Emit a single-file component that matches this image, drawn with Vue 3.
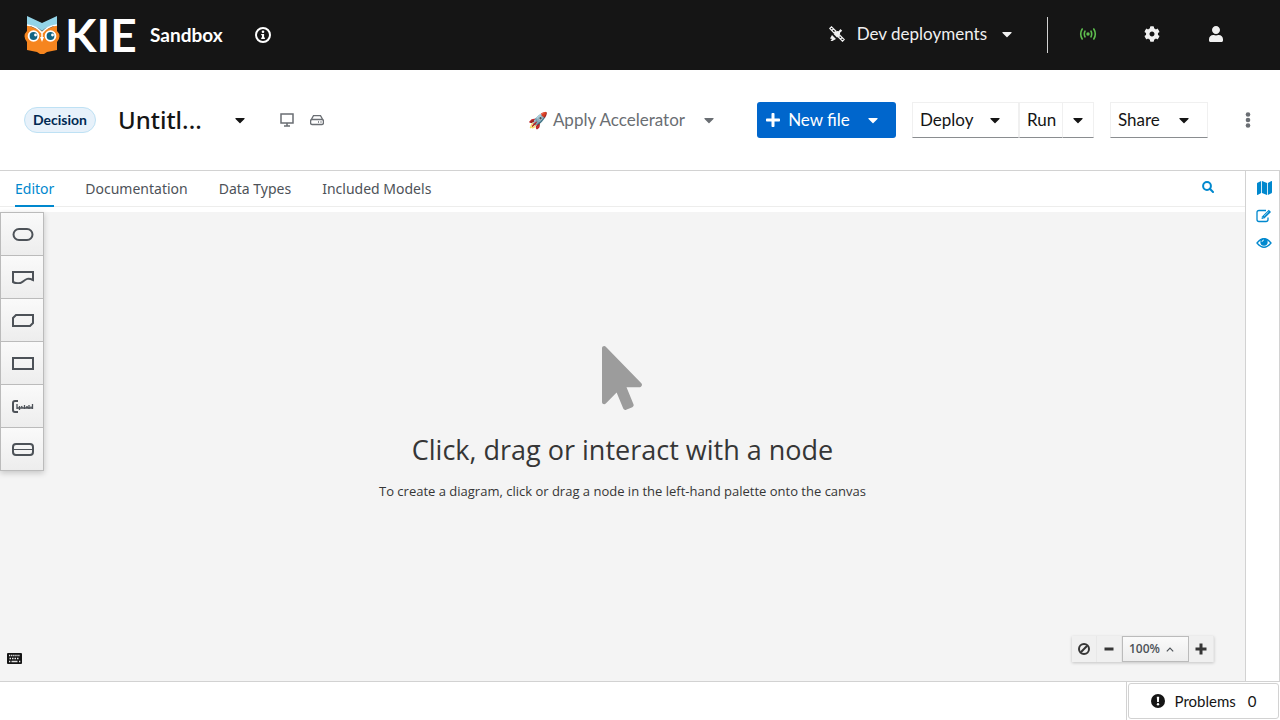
<script setup>
import { ref } from 'vue'

const tabs = ['Editor', 'Documentation', 'Data Types', 'Included Models']
const activeTab = ref('Editor')
const fileName = ref('Untitl...')

const caret = 'M31.3 192h257.3c17.8 0 26.7 21.5 14.1 34.1L174.1 354.8c-7.8 7.8-20.5 7.8-28.3 0L17.2 226.1C4.6 213.5 13.5 192 31.3 192z'
const plus = 'M416 208H272V64c0-17.67-14.33-32-32-32h-32c-17.67 0-32 14.33-32 32v144H32c-17.67 0-32 14.33-32 32v32c0 17.67 14.33 32 32 32h144v144c0 17.67 14.33 32 32 32h32c17.67 0 32-14.33 32-32V304h144c17.67 0 32-14.33 32-32v-32c0-17.67-14.33-32-32-32z'
const cog = 'M487.4 315.7l-42.6-24.6c4.3-23.2 4.3-47 0-70.2l42.6-24.6c4.9-2.8 7.1-8.6 5.5-14-11.1-35.6-30-67.8-54.7-94.6-3.8-4.1-10-5.1-14.8-2.3L380.8 110c-17.9-15.4-38.5-27.3-60.8-35.1V25.8c0-5.6-3.9-10.5-9.4-11.7-36.7-8.2-74.3-7.8-109.2 0-5.5 1.2-9.4 6.1-9.4 11.7V75c-22.2 7.9-42.8 19.8-60.8 35.1L88.7 85.5c-4.9-2.8-11-1.9-14.8 2.3-24.7 26.7-43.6 58.9-54.7 94.6-1.7 5.4.6 11.2 5.5 14L67.3 221c-4.3 23.2-4.3 47 0 70.2l-42.6 24.6c-4.9 2.8-7.1 8.6-5.5 14 11.1 35.6 30 67.8 54.7 94.6 3.8 4.1 10 5.1 14.8 2.3l42.6-24.6c17.9 15.4 38.5 27.3 60.8 35.1v49.2c0 5.6 3.9 10.5 9.4 11.7 36.7 8.2 74.3 7.8 109.2 0 5.5-1.2 9.4-6.1 9.4-11.7v-49.2c22.2-7.9 42.8-19.8 60.8-35.1l42.6 24.6c4.9 2.8 11 1.9 14.8-2.3 24.7-26.7 43.6-58.9 54.7-94.6 1.5-5.5-.7-11.3-5.6-14.1zM256 336c-44.1 0-80-35.9-80-80s35.9-80 80-80 80 35.9 80 80-35.9 80-80 80z'
const user = 'M224 256c70.7 0 128-57.3 128-128S294.7 0 224 0 96 57.3 96 128s57.3 128 128 128zm89.6 32h-16.7c-22.2 10.2-46.9 16-72.9 16s-50.6-5.8-72.9-16h-16.7C60.2 288 0 348.2 0 422.4V464c0 26.5 21.5 48 48 48h352c26.5 0 48-21.5 48-48v-41.6c0-74.2-60.2-134.4-134.4-134.4z'
const pointer = 'M302.189 329.126H196.105l55.831 135.993c3.889 9.428-.555 19.999-9.444 23.999l-49.165 21.427c-9.165 4-19.443-.571-23.332-9.714l-53.053-129.136-86.664 89.138C18.729 472.71 0 463.554 0 447.977V18.299C0 1.899 19.921-6.096 30.277 5.443l284.412 292.542c11.472 11.179 3.007 31.141-12.5 31.141z'
const map = 'M0 117.66v346.32c0 11.32 11.43 19.06 21.94 14.86L160 416V32L20.12 87.95A32.006 32.006 0 0 0 0 117.66zM192 416l192 64V96L192 32v384zM554.06 33.16L416 96v384l139.88-55.95A31.996 31.996 0 0 0 576 394.34V48.02c0-11.32-11.43-19.06-21.94-14.86z'

const palette = [
  { name: 'Input Data', paths: ['M7 1h8a5 5 0 0 1 0 11H7A5 5 0 0 1 7 1z'] },
  { name: 'Knowledge Source', paths: ['M1 1h20v8C16 6.500 14 8 11 10.500C8 13 4 12.500 1 11z'] },
  { name: 'Business Knowledge Model', paths: ['M4 1h17v8l-3 3H1V4z'] },
  { name: 'Decision', paths: ['M1 1h20v11H1z'] },
  { name: 'Text Annotation', paths: ['M6 1H3Q1 1 1 3v7q0 2 2 2h3', 'M5 4v5 M7.500 6v4 M9.500 6l1 2.500 M12.500 5v4 M14 7h2 M17 5v4 M18.500 7h1 M20.500 4v5 M5 8h16'] },
  { name: 'Decision Service', paths: ['M4 1h14q3 0 3 3v5q0 3-3 3H4q-3 0-3-3V4q0-3 3-3z'], line: 'M1 6.500h20' },
]
</script>

<template>
  <div class="app">
    <header class="masthead">
      <a class="brand" href="#" aria-label="KIE Sandbox home">
        <svg class="owl" viewBox="0 0 36 39" aria-hidden="true">
          <path fill="#f6851f" d="M3 10L18 16L33 10V16Q38 21 33 27V35L23 37L20 39H16L13 37L3 35V27Q-2 21 3 16z" />
          <path fill="#93d4e8" d="M3 1L18 8L33 1V10Q23 11 18 16Q13 11 3 10z" />
          <path fill="none" stroke="#fff" stroke-width="1.500" d="M3 10Q13 11 18 18Q23 11 33 10M18 18v7" />
          <circle cx="9.500" cy="21" r="5.800" fill="#fff" />
          <circle cx="26.500" cy="21" r="5.800" fill="#fff" />
          <circle cx="9.500" cy="21" r="3.900" fill="#126483" />
          <circle cx="26.500" cy="21" r="3.900" fill="#126483" />
          <circle cx="11.500" cy="20" r="1.400" fill="#fff" />
          <circle cx="28.500" cy="20" r="1.400" fill="#fff" />
          <path fill="#fff" d="M16 22h4l-2 5z" />
        </svg>
        <span class="kie">KIE</span>
        <span class="product">Sandbox</span>
      </a>
      <button class="plain info" aria-label="About">
        <svg width="16" height="16" viewBox="0 0 16 16"><circle cx="8" cy="8" r="7" fill="none" stroke="#fff" stroke-width="2" /><circle cx="8" cy="4.800" r="1.300" fill="#fff" /><path fill="#fff" d="M6.200 7h2.900v3.500h.8V12H6.200v-1.500H7V8.300h-.8z" /></svg>
      </button>
      <div class="tools">
        <button class="plain deployments">
          <svg class="satellite" width="16" height="16" viewBox="0 0 16 16" fill="none" stroke="#f0f0f0" stroke-width="1.200">
            <path d="M.8 2.500L2.500.8L6.800 5L5 6.800zM9.300 11L11 9.300L15.200 13.500L13.500 15.200zM2.800 4.500L4.500 2.800M11.400 13.200L13.200 11.400" />
            <path fill="#f0f0f0" stroke="none" d="M4.800 8.200Q6 4.500 9.600 5.200L11.500 3l1.700 1.700L11 6.800Q11.500 10 8 11.400zM1 12.500l2-3.500L7 13l-3.600 2L1.500 15l1.500-2z" />
          </svg>
          <span>Dev deployments</span>
          <svg class="caret" viewBox="0 0 320 512"><path :d="caret" /></svg>
        </button>
        <span class="divider"></span>
        <button class="plain tool" aria-label="Extended services">
          <svg class="signal" width="18" height="16" viewBox="0 0 18 16" stroke="#5ebd4e" stroke-width="1.600" stroke-linecap="round"><path d="M3.200 3Q.2 8 3.200 13M6 5.200Q4.600 8 6 10.800M12 5.200Q13.400 8 12 10.800M14.800 3Q17.800 8 14.800 13" /><circle cx="9" cy="8" r="1.700" fill="#5ebd4e" stroke="none" /></svg>
        </button>
        <button class="plain tool" aria-label="Settings"><svg width="16" height="16" viewBox="0 0 512 512"><path :d="cog" /></svg></button>
        <button class="plain tool" aria-label="Account"><svg width="14" height="16" viewBox="0 0 448 512"><path :d="user" /></svg></button>
      </div>
    </header>

    <section class="toolbar">
      <span class="badge">Decision</span>
      <input v-model="fileName" class="filename" aria-label="File name">
      <button class="plain file-switch" aria-label="Switch file"><svg class="caret" viewBox="0 0 320 512"><path :d="caret" /></svg></button>
      <span class="status">
        <svg width="14" height="14" viewBox="0 0 14 14" fill="none" stroke="#6a6e73" stroke-width="1.500"><path d="M1 1h12v9H1zM7 10v3M4 13h6" /></svg>
        <svg width="14" height="14" viewBox="0 0 14 14" fill="none" stroke="#6a6e73" stroke-width="1.300"><path d="M1 7L3.500 2.600h7L13 7M2 6.500h10q1.400 0 1.400 1.400v2.200q0 1.400-1.400 1.400H2Q.6 11.500.6 10.100V7.900Q.6 6.500 2 6.500z" /><path d="M8 9h1M10.500 9h1" stroke-width="1.500" /></svg>
      </span>
      <div class="actions">
        <button class="plain accelerator"><span class="rocket">🚀</span><span>Apply Accelerator</span><svg class="caret" viewBox="0 0 320 512"><path :d="caret" /></svg></button>
        <button class="btn primary"><svg width="14" height="16" viewBox="0 0 448 512"><path :d="plus" /></svg><span>New file</span><svg class="caret" viewBox="0 0 320 512"><path :d="caret" /></svg></button>
        <div class="group">
          <button class="btn deploy"><span>Deploy</span><svg class="caret" viewBox="0 0 320 512"><path :d="caret" /></svg></button>
          <button class="btn run">Run</button>
          <button class="btn run-menu" aria-label="Run options"><svg class="caret" viewBox="0 0 320 512"><path :d="caret" /></svg></button>
        </div>
        <button class="btn share"><span>Share</span><svg class="caret" viewBox="0 0 320 512"><path :d="caret" /></svg></button>
        <button class="plain kebab" aria-label="More actions"><svg width="6" height="16" viewBox="0 0 6 16"><circle cx="3" cy="2.500" r="2.300" /><circle cx="3" cy="8" r="2.300" /><circle cx="3" cy="13.500" r="2.300" /></svg></button>
      </div>
    </section>

    <main class="workspace">
      <div class="editor">
        <nav class="tabs">
          <a v-for="tab in tabs" :key="tab" href="#" class="tab" :class="{ active: tab === activeTab }" @click.prevent="activeTab = tab">{{ tab }}</a>
          <button class="plain search" aria-label="Search"><svg width="12" height="12" viewBox="0 0 12 12" fill="none" stroke="#0088ce" stroke-width="2"><circle cx="5" cy="5" r="3.900" /><path d="M7.800 7.800L11 11" stroke-linecap="round" /></svg></button>
        </nav>
        <div class="canvas">
          <div class="palette">
            <button v-for="item in palette" :key="item.name" :aria-label="item.name">
              <svg width="22" height="13" viewBox="0 0 22 13" fill="none" stroke="#4d5258">
                <path v-for="(p, i) in item.paths" :key="p" :d="p" :stroke-width="i ? 1.3 : 2" />
                <path v-if="item.line" :d="item.line" stroke-width="1" />
              </svg>
            </button>
          </div>
          <div class="empty">
            <svg width="42" height="64" viewBox="0 0 320 512"><path :d="pointer" fill="#9c9c9c" /></svg>
            <h1>Click, drag or interact with a node</h1>
            <p>To create a diagram, click or drag a node in the left-hand palette onto the canvas</p>
          </div>
          <button class="plain keyboard" aria-label="Keyboard shortcuts">
            <svg width="16" height="11" viewBox="0 0 16 11"><rect y="0" width="15" height="11" rx="1" fill="#151515" /><path d="M2 2.500h11M2 8.500h1.500M12 8.500h1.500" stroke="#eee" stroke-width="1.300" stroke-dasharray="1.300 .8" /><path d="M2.500 5.500h10" stroke="#eee" stroke-width="1.500" stroke-dasharray="1.500 1" /><path d="M4.500 8.500h6" stroke="#ddd" stroke-width="1.500" /></svg>
          </button>
          <div class="zoom">
            <button aria-label="Reset zoom"><svg width="12" height="12" viewBox="0 0 12 12" fill="none" stroke="#363636" stroke-width="2"><circle cx="6" cy="6" r="5" /><path d="M2.800 9.200L9.200 2.800" /></svg></button>
            <button aria-label="Zoom out"><svg width="10" height="10" viewBox="0 0 10 10"><path d="M.5 3.500h9v3h-9z" /></svg></button>
            <button class="level">100%<svg width="8" height="5" viewBox="0 0 8 5" fill="none" stroke="#4d5258" stroke-width="1.200"><path d="M.8 4.400L4 1.200L7.200 4.400" /></svg></button>
            <button aria-label="Zoom in"><svg width="12" height="12" viewBox="0 0 12 12"><path d="M4.500.5h3v4h4v3h-4v4h-3v-4h-4v-3h4z" /></svg></button>
          </div>
        </div>
      </div>
      <aside class="dock">
        <button class="plain" aria-label="Decision navigator"><svg width="15" height="14" viewBox="0 32 576 448" preserveAspectRatio="none"><path :d="map" fill="#0088ce" /></svg></button>
        <button class="plain" aria-label="Properties"><svg width="16" height="14" viewBox="0 0 16 14" fill="none" stroke="#0088ce"><path d="M10 1.500H3Q1 1.500 1 3.500v7q0 2 2 2h7q2 0 2-2V8.500" stroke-width="1.300" /><path d="M5.500 10L6 7.500L12.800.8L15 3L8.300 9.600z" fill="#0088ce" stroke="none" /><path d="M8 7.200L12.500 2.800M6.500 8.200L7.800 9.400" stroke="#fff" stroke-width=".6" /></svg></button>
        <button class="plain" aria-label="Preview"><svg width="16" height="12" viewBox="0 0 16 12" fill="none" stroke="#0088ce" stroke-width="1.300"><path d="M1 6Q8-2.500 15 6Q8 14.500 1 6z" /><circle cx="8" cy="5" r="3.700" fill="#0088ce" stroke="none" /><path d="M6 5Q6 3 8 3" stroke="#fff" stroke-width=".8" /></svg></button>
      </aside>
    </main>

    <footer class="statusbar">
      <div class="problems-wrap">
        <button class="problems">
          <svg width="14" height="14" viewBox="0 0 14 14"><circle cx="7" cy="7" r="7" fill="#151515" /><path d="M5.800 2.800h2.400L7.900 8H6.100z" fill="#fff" /><circle cx="7" cy="10.200" r="1.200" fill="#fff" /></svg>
          <span>Problems</span><span>0</span>
        </button>
      </div>
    </footer>
  </div>
</template>

<style>
body { margin: 0; }
</style>

<style scoped>
.app { display: flex; flex-direction: column; height: 100vh; background: #fff; color: #151515; font: 17px/24px Lato, sans-serif; overflow: hidden; }
* { box-sizing: border-box; }
button { font: inherit; color: inherit; cursor: pointer; white-space: nowrap; }
svg { flex: none; display: block; }
.plain { display: flex; align-items: center; border: 0; padding: 0; background: none; }
.caret { width: 10px; height: 16px; fill: currentColor; }

.masthead { display: flex; align-items: center; height: 70px; padding: 0 32px 0 24px; background: #151515; color: #f0f0f0; flex: none; }
.brand { display: flex; align-items: center; color: #fff; text-decoration: none; }
.owl { width: 36px; height: 39px; margin-bottom: 2px; }
.kie { margin-left: 5px; width: 71px; font: 700 46px/48px Lato, sans-serif; }
.product { margin-left: 14px; width: 74px; font: 700 19px/24px Lato, sans-serif; }
.info { margin-left: 31px; }
.tools { display: flex; align-items: center; margin-left: auto; }
.tools svg { fill: currentColor; }
.tools .satellite { fill: none; margin-right: 12px; }
.tools .signal { fill: none; }
.deployments { padding-bottom: 2px; }
.deployments .caret { margin-left: 15px; }
.divider { width: 1px; height: 36px; margin: 0 8px 0 35px; background: #d2d2d2; }
.tool { justify-content: center; width: 64px; height: 36px; padding-bottom: 2px; }

.toolbar { display: flex; align-items: center; height: 101px; padding: 0 29px 0 24px; border-bottom: 1px solid #d2d2d2; flex: none; }
.badge { min-width: 72px; height: 26px; border: 1px solid #bee1f4; border-radius: 13px; background: #e7f1fa; color: #002952; font: 700 14px/24px Lato, sans-serif; text-align: center; }
.filename { width: 96px; margin-left: 18px; padding: 0 4px; border: 0; outline: 0; background: none; color: #151515; font: 500 24px/32px "Noto Sans", sans-serif; }
.file-switch { margin-left: 25px; }
.status { display: flex; gap: 16px; margin-left: 35px; }
.actions { display: flex; align-items: center; margin-left: auto; }
.accelerator { color: #6a6e73; margin-right: 43px; }
.rocket { margin-right: 5px; font-size: 16px; }
.accelerator .caret { margin-left: 19px; }
.btn { display: flex; align-items: center; justify-content: space-between; height: 36px; padding: 0 18px 0 7px; border: 1px solid #f0f0f0; border-bottom-color: #8a8d90; background: #fff; }
.primary { width: 139px; padding-left: 9px; border: 0; border-radius: 3px; background: #06c; color: #fff; fill: #fff; }
.primary span { margin-right: 10px; }
.group { display: flex; margin: 0 16px; }
.deploy { width: 107px; }
.run { width: 44px; }
.run-menu { width: 31px; padding: 0; justify-content: center; border-left: 0; }
.share { width: 98px; }
.kebab { margin-left: 37px; fill: #6a6e73; }

.workspace { display: flex; flex: 1; min-height: 0; }
.editor { display: flex; flex-direction: column; flex: 1; min-width: 0; }
.tabs { display: flex; gap: 31px; height: 36px; padding: 0 31px 0 15px; border-bottom: 1px solid #ededec; font: 14px/36px "Noto Sans", sans-serif; flex: none; }
.tab { height: 36px; color: #4d5258; text-decoration: none; }
.tab.active { color: #0088ce; border-bottom: 2px solid #0088ce; }
.search { height: 32px; margin-left: auto; }
.canvas { position: relative; display: flex; flex: 1; justify-content: center; align-items: center; margin-top: 5px; background: #f4f4f4; font-family: "Open Sans", sans-serif; color: #363636; }
.palette { position: absolute; left: 0; top: 0; width: 44px; border: 1px solid #bbb; box-shadow: 0 2px 6px rgba(3, 3, 3, .2); }
.palette button { display: flex; align-items: center; justify-content: center; width: 100%; height: 43px; padding: 0 0 0 1px; border: 0; border-bottom: 1px solid #bbb; background: linear-gradient(#fafafa, #ededed); }
.palette button:last-child { height: 42px; border-bottom: 0; }
.empty { display: flex; flex-direction: column; align-items: center; margin-bottom: 48px; }
.empty h1 { margin: 21px 0 13px; font-size: 27px; line-height: 38px; font-weight: 400; }
.empty p { margin: 0; font-size: 13px; line-height: 18px; }
.keyboard { position: absolute; left: 7px; bottom: 17px; }
.zoom { position: absolute; right: 31px; bottom: 19px; display: flex; height: 26px; box-shadow: 0 1px 3px rgba(3, 3, 3, .2); fill: #363636; }
.zoom button { display: flex; align-items: center; justify-content: center; width: 25px; padding: 0; border: 0; border-right: 1px solid #e8e8e8; background: #f0f0f0; }
.zoom .level { width: 67px; gap: 6px; padding-left: 6px; justify-content: flex-start; border: 1px solid #bbb; background: linear-gradient(#fafafa, #ededed); color: #4d5258; font-size: 12px; font-weight: 600; }
.dock { display: flex; flex-direction: column; align-items: center; gap: 14px; width: 35px; padding: 10px 0 0 3px; border-left: 1px solid #d2d2d2; border-right: 1px solid #d2d2d2; flex: none; }

.statusbar { display: flex; justify-content: flex-end; height: 39px; border-top: 1px solid #d2d2d2; flex: none; }
.problems-wrap { display: flex; padding: 1px; border-left: 1px solid #d2d2d2; }
.problems { display: flex; align-items: center; justify-content: center; gap: 12px; width: 151px; height: 36px; border: 1px solid #d2d2d2; border-radius: 3px; background: #fff; font-size: 15px; }
.problems svg { margin-right: -2px; }
</style>
